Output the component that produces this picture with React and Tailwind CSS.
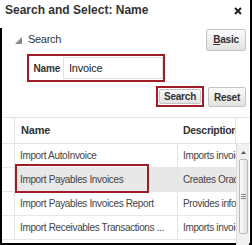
const rows = [
  { name: 'Import AutoInvoice', desc: 'Imports invoices' },
  { name: 'Import Payables Invoices', desc: 'Creates Oracle', selected: true },
  { name: 'Import Payables Invoices Report', desc: 'Provides info' },
  { name: 'Import Receivables Transactions ...', desc: 'Imports invoices' },
];

const btn =
  'flex items-center justify-center rounded-[2px] border border-[#c4c4c4] bg-gradient-to-b from-[#fafafa] to-[#e2e2e2] text-[10px] font-bold text-[#333] tracking-[-0.2px]';

export default function App() {
  return (
    <div className="w-[252px] h-[245px] bg-white overflow-hidden font-['Liberation_Sans',Arial,sans-serif] text-[#333]">
      <div className="relative w-[252px] h-[245px] border-r-2 border-b-2 border-black">
        {/* title */}
        <div className="h-[20px] pl-[5px] pr-[8px] flex items-center justify-between">
          <span className="text-[12px] font-bold leading-none text-[#333]">Search and Select: Name</span>
          <svg width="8" height="8" viewBox="0 0 8 8" className="mt-[1px]">
            <path d="M1 1 L7 7 M7 1 L1 7" stroke="#222" strokeWidth="2" />
          </svg>
        </div>

        <div className="h-[223px] border-l-2 border-black">
          {/* search header */}
          <div className="mt-[8px] h-[23px] flex items-center justify-between pl-[13px] pr-[4px]">
            <div className="flex items-center gap-[6px]">
              <svg width="7" height="7" viewBox="0 0 7 7" className="mt-[2px]">
                <polygon points="7,0 7,7 0,7" fill="#8a8a8a" />
              </svg>
              <span className="text-[11px] leading-none tracking-[-0.3px]">Search</span>
            </div>
            <div className={`${btn} w-[40px] h-[22px]`}>
              <span><span className="underline">B</span>asic</span>
            </div>
          </div>

          {/* name field */}
          <div className="mt-[3px] ml-[25px] w-[138px] h-[28px] border-2 border-[#a01d26] flex items-center pl-[2px]">
            <span className="text-[10px] font-bold w-[29px] text-right text-[#333] tracking-[-0.2px]">Name</span>
            <div className="ml-[3px] w-[100px] h-[22px] border border-[#e0e0e0] flex items-center pl-[5px] text-[11px] text-[#222] tracking-[-0.2px]">
              Invoice
            </div>
          </div>

          {/* buttons */}
          <div className="mt-[4px] flex justify-end gap-[4px] pr-[4px]">
            <div className="w-[48px] h-[21px] border-2 border-[#a01d26] p-[1px]">
              <div className={`${btn} w-full h-full`}>Search</div>
            </div>
            <div className={`${btn} w-[38px] h-[20px] mt-[1px]`}>Reset</div>
          </div>

          {/* table */}
          <div className="relative mt-[10px] border-t border-[#e3e3e3]">
            <div className="flex h-[26px] border-b border-[#e3e3e3]">
              <div className="w-[13px] border-r border-[#e3e3e3]" />
              <div className="w-[163px] flex items-center pl-[6px] text-[11px] font-bold tracking-[-0.2px]">Name</div>
              <div className="w-[58px] flex items-center pl-[5px] text-[10.5px] font-bold whitespace-nowrap overflow-hidden border-r border-[#e3e3e3] tracking-[-0.3px]">
                Description
              </div>
              <div className="flex-1" />
            </div>
            <div className="flex">
              <div className="w-[234px]">
                {rows.map((r) => (
                  <div
                    key={r.name}
                    className={`flex h-[24px] border-b border-[#e8e8e8] text-[10px] tracking-[-0.35px] text-[#444] ${r.selected ? 'bg-[#e8e8e8]' : ''}`}
                  >
                    <div className="w-[13px] border-r border-[#e3e3e3] bg-white" />
                    <div className="w-[163px] flex items-center pl-[5px] whitespace-nowrap overflow-hidden border-r border-[#e3e3e3]">
                      {r.name}
                    </div>
                    <div className="w-[58px] flex items-center pl-[5px] whitespace-nowrap overflow-hidden">{r.desc}</div>
                  </div>
                ))}
              </div>
              {/* scrollbar */}
              <div className="w-[13px] h-[102px] bg-[#f1f1f1] border-l border-[#dcdcdc] flex flex-col items-center">
                <svg width="7" height="5" viewBox="0 0 7 5" className="mt-[6px]">
                  <polygon points="3.5,1 6,4 1,4" fill="#555" />
                </svg>
                <div className="mt-[4px] w-[9px] h-[75px] rounded-[2px] border border-[#b9b9b9] bg-gradient-to-r from-[#fbfbfb] to-[#e0e0e0] flex items-center justify-center">
                  <div className="flex flex-col gap-[1px]">
                    <div className="w-[5px] h-px bg-[#888]" />
                    <div className="w-[5px] h-px bg-[#888]" />
                    <div className="w-[5px] h-px bg-[#888]" />
                  </div>
                </div>
              </div>
            </div>
            {/* highlight box */}
            <div className="absolute left-[13px] top-[46px] w-[134px] h-[29px] border-2 border-[#a01d26]" />
          </div>
        </div>
      </div>
    </div>
  );
}
